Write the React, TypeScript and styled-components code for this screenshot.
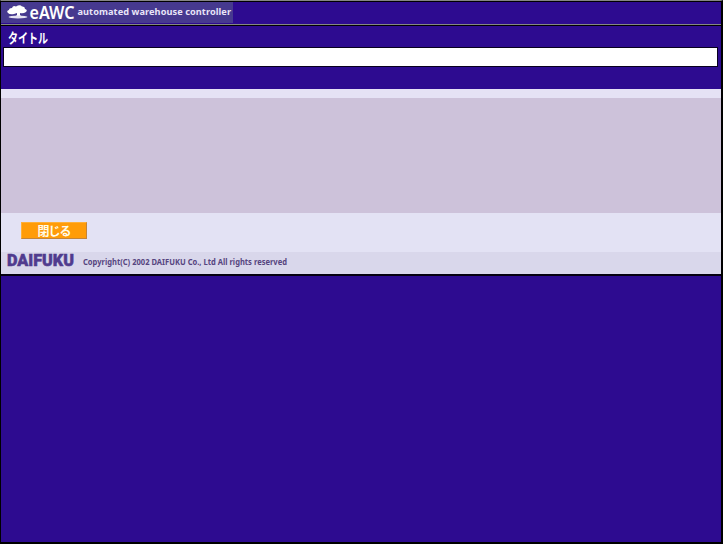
import React from "react";
import styled, { createGlobalStyle } from "styled-components";

const GlobalStyle = createGlobalStyle`
  * { box-sizing: border-box; }
  body { margin: 0; background: #000; overflow: hidden; }
`;

const Window = styled.main`
  width: 723px;
  height: 544px;
  display: flex;
  flex-direction: column;
  background: #2d0b90;
  border: 1px solid #000;
  border-top: 1px solid #858585;
  border-right-width: 2px;
  border-bottom-width: 2px;
  font-family: "Noto Sans", "Noto Sans CJK JP", sans-serif;
`;

const Header = styled.header`
  height: 23px;
  flex: none;
  border-top: 1px solid #000;
`;

const Brand = styled.div`
  width: 232px;
  height: 21px;
  background: #46398f;
  display: flex;
`;

const TitleArea = styled.section`
  height: 65px;
  flex: none;
  border-top: 1px solid #858585;
  box-shadow: inset 0 1px #000;
  padding: 4px 3px 0 2px;
`;

const Label = styled.label`
  display: block;
  height: 18px;
  padding-left: 5px;
  color: #fff;
  font: bold 13.5px/16px "Noto Sans CJK JP", sans-serif;
`;

const CondensedText = styled.span<{ $scale: number }>`
  display: inline-block;
  transform: scaleX(${({ $scale }) => $scale});
  transform-origin: left center;
`;

const TitleField = styled.input`
  display: block;
  width: 715px;
  height: 20px;
  padding: 0 4px;
  background: #fff;
  border: 1px solid #08001f;
  border-radius: 0;
  outline: none;
`;

const Divider = styled.div`
  height: 9px;
  flex: none;
  background: #e5e2f5;
`;

const Content = styled.div`
  height: 115px;
  flex: none;
  background: #cdc2da;
`;

const Actions = styled.div`
  height: 39px;
  flex: none;
  background: #e3e2f4;
  padding: 9px 20px;
`;

const CloseButton = styled.button`
  display: flex;
  align-items: center;
  justify-content: center;
  width: 66px;
  height: 17px;
  padding: 0;
  border: 1px solid #ffb037;
  border-right-color: #c38438;
  border-bottom-color: #c38438;
  background: #ff9c08;
  color: #fffbe8;
  font: bold 12px/15px "Noto Sans CJK JP", sans-serif;
  letter-spacing: -1px;
`;

const Footer = styled.footer`
  height: 24px;
  flex: none;
  display: flex;
  background: #d9d7eb;
  border-bottom: 2px solid #050011;
`;

const Drawing = styled.svg`
  display: block;
  flex: none;
  overflow: visible;
`;

function ProductLogo() {
  return (
    <Brand>
      <Drawing width="232" height="21" role="img" aria-label="eAWC automated warehouse controller">
        <path fill="#fff" d="M7 11Q5 9 8 8Q8 6 11 6Q12 3 15 4.5Q19 2 21 4.5Q24 4 24 7Q27 8 25 10Q22 12 19 11L19 13L21 15H14L16 13V11L13 12Q9 13 7 11Z" />
        <ellipse cx="17" cy="15" rx="9.5" ry="1.5" fill="#e5e2f2" />
        <text x="28.5" y="17" fill="#fff" fontFamily="Noto Sans, sans-serif" fontSize="17" fontWeight="600" textLength="45" lengthAdjust="spacingAndGlyphs">eAWC</text>
        <text x="76.5" y="13" fill="#e9e5f8" fontFamily="Noto Sans, sans-serif" fontSize="9.2" fontWeight="700" textLength="153.5" lengthAdjust="spacing">automated warehouse controller</text>
      </Drawing>
    </Brand>
  );
}

function CompanyLine() {
  return (
    <Drawing width="300" height="22" role="img" aria-label="DAIFUKU copyright">
      <text x="6" y="13.8" fill="#503b8e" stroke="#503b8e" strokeWidth=".5" fontFamily="Roboto, sans-serif" fontSize="16.2" fontWeight="900" textLength="67" lengthAdjust="spacingAndGlyphs">DAIFUKU</text>
      <text x="82" y="12.5" fill="#564580" fontFamily="Noto Sans, sans-serif" fontSize="8" fontWeight="700" textLength="204" lengthAdjust="spacingAndGlyphs">Copyright(C) 2002 DAIFUKU Co., Ltd  All rights reserved</text>
    </Drawing>
  );
}

export default function App() {
  return (
    <>
      <GlobalStyle />
      <Window>
        <Header><ProductLogo /></Header>
        <TitleArea>
          <Label htmlFor="title"><CondensedText $scale={0.74}>タイトル</CondensedText></Label>
          <TitleField id="title" type="text" />
        </TitleArea>
        <Divider />
        <Content />
        <Actions><CloseButton type="button">閉じる</CloseButton></Actions>
        <Footer><CompanyLine /></Footer>
      </Window>
    </>
  );
}
